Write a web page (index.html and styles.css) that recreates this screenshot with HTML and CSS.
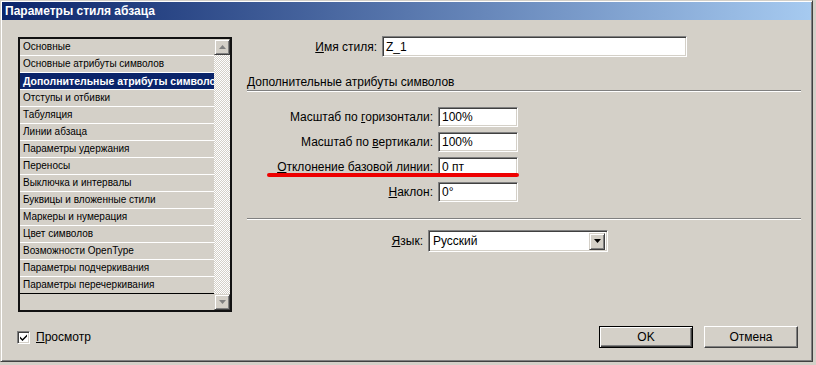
FILE: index.html
```html
<!DOCTYPE html>
<html lang="ru">
<head>
  <meta charset="UTF-8">
  <title>Параметры стиля абзаца</title>
  <link rel="stylesheet" href="styles.css">
</head>
<body>
  <div class="window">
    <div class="titlebar">Параметры стиля абзаца</div>

    <div class="content">
      <div class="main">
        <div class="listbox">
          <div class="items">
            <div class="item">Основные</div>
            <div class="item">Основные атрибуты символов</div>
            <div class="item selected">Дополнительные атрибуты символов</div>
            <div class="item">Отступы и отбивки</div>
            <div class="item">Табуляция</div>
            <div class="item">Линии абзаца</div>
            <div class="item">Параметры удержания</div>
            <div class="item">Переносы</div>
            <div class="item">Выключка и интервалы</div>
            <div class="item">Буквицы и вложенные стили</div>
            <div class="item">Маркеры и нумерация</div>
            <div class="item">Цвет символов</div>
            <div class="item">Возможности OpenType</div>
            <div class="item">Параметры подчеркивания</div>
            <div class="item last">Параметры перечеркивания</div>
          </div>
          <div class="scrollbar">
            <div class="sbtn">
              <svg width="7" height="5" viewBox="0 0 7 5"><path d="M3.5 0 L7 4 L0 4 Z" fill="#808080"/></svg>
            </div>
            <div class="track"></div>
            <div class="sbtn">
              <svg width="7" height="5" viewBox="0 0 7 5"><path d="M0 0 L7 0 L3.5 4 Z" fill="#808080"/></svg>
            </div>
          </div>
        </div>

        <div class="panel">
          <div class="row name-row">
            <label class="lbl"><u>И</u>мя стиля:</label>
            <div class="field wide">Z_1</div>
          </div>

          <div class="group-title">Дополнительные атрибуты символов</div>

          <div class="fields">
            <div class="row">
              <label class="lbl lbl-f">Масштаб по <u>г</u>оризонтали:</label>
              <div class="field small">100%</div>
            </div>
            <div class="row">
              <label class="lbl lbl-f">Масштаб по <u>в</u>ертикали:</label>
              <div class="field small">100%</div>
            </div>
            <div class="row marked">
              <label class="lbl lbl-f"><u>О</u>тклонение базовой линии:</label>
              <div class="field small">0 пт</div>
              <span class="redline"></span>
            </div>
            <div class="row">
              <label class="lbl lbl-f"><u>Н</u>аклон:</label>
              <div class="field small">0°</div>
            </div>
          </div>

          <div class="sep"></div>

          <div class="row lang-row">
            <label class="lbl lbl-l"><u>Я</u>зык:</label>
            <div class="select">
              <span>Русский</span>
              <div class="dd">
                <svg width="7" height="4" viewBox="0 0 7 4"><path d="M0 0 L7 0 L3.5 4 Z" fill="#000"/></svg>
              </div>
            </div>
          </div>
        </div>
      </div>

      <div class="bottom">
        <div class="check">
          <span class="box">
            <svg width="9" height="9" viewBox="0 0 9 9"><path d="M1 3.5 L3.5 6 L8 1.5 L8 3.5 L3.5 8 L1 5.5 Z" fill="#000"/></svg>
          </span>
          <span><u>П</u>росмотр</span>
        </div>
        <div class="buttons">
          <div class="btn default">OK</div>
          <div class="btn">Отмена</div>
        </div>
      </div>
    </div>
  </div>
</body>
</html>
```

FILE: styles.css
```css
html {
  background: #d4d0c8;
}
body {
  margin: 0;
  font-family: "Liberation Sans", Arial, sans-serif;
  font-size: 12px;
  color: #000;
}
.window {
  width: 813px;
  height: 362px;
  box-sizing: border-box;
  border: 1px solid;
  border-color: #d4d0c8 #404040 #404040 #d4d0c8;
  box-shadow: inset 1px 1px #fff, inset -1px -1px #808080;
  padding: 1px;
  background: #d4d0c8;
}
.titlebar {
  height: 18px;
  line-height: 18px;
  padding-left: 3px;
  color: #fff;
  font-weight: bold;
  font-size: 12px;
  background: linear-gradient(to right, #0a246a, #a6caf0);
}
.content {
  padding: 16px 10px 0 16px;
}
.main {
  display: flex;
  gap: 15px;
  align-items: flex-start;
}

/* list */
.listbox {
  margin-top: 1px;
  width: 214px;
  height: 275px;
  box-sizing: border-box;
  border: 2px solid #111;
  display: flex;
  background: #d4d0c8;
}
.items {
  width: 194px;
  overflow: hidden;
  font-size: 10px;
}
.item {
  height: 16px;
  line-height: 16px;
  border-bottom: 1px solid #fff;
  padding-left: 3px;
  white-space: nowrap;
  overflow: hidden;
}
.item.selected {
  background: #0a246a;
  color: #fff;
  font-weight: bold;
  font-size: 10.5px;
}
.item.last {
  border-bottom-color: #000;
}
.scrollbar {
  width: 16px;
  display: flex;
  flex-direction: column;
}
.sbtn {
  height: 16px;
  box-sizing: border-box;
  border: 1px solid;
  border-color: #d4d0c8 #404040 #404040 #d4d0c8;
  box-shadow: inset 1px 1px #fff, inset -1px -1px #808080;
  background: #d4d0c8;
  display: flex;
  align-items: center;
  justify-content: center;
}
.track {
  flex: 1;
  background-image: repeating-conic-gradient(#fff 0 25%, #d4d0c8 0 50%);
  background-size: 2px 2px;
}

/* right side */
.panel {
  flex: 1;
}
.row {
  display: flex;
  align-items: center;
  gap: 5px;
  height: 20px;
}
.lbl {
  text-align: right;
  white-space: nowrap;
}
.name-row {
  height: 21px;
}
.name-row .lbl {
  width: 130px;
}
.lbl-f {
  width: 186px;
}
.lbl-l {
  width: 176px;
}
.field {
  height: 100%;
  box-sizing: border-box;
  border: 1px solid;
  border-color: #808080 #fff #fff #808080;
  box-shadow: inset 1px 1px #404040, inset -1px -1px #d4d0c8;
  background: #fff;
  padding: 0 3px;
  display: flex;
  align-items: center;
}
.field.wide {
  width: 305px;
}
.field.small {
  width: 80px;
}
.group-title {
  margin-top: 17px;
  height: 16px;
  line-height: 16px;
  border-bottom: 1px solid #808080;
  box-shadow: 0 1px #fff;
}
.fields {
  margin-top: 16px;
  display: flex;
  flex-direction: column;
  gap: 5px;
}
.marked {
  position: relative;
}
.redline {
  position: absolute;
  left: 20px;
  top: 16px;
  width: 252px;
  height: 4px;
  border-radius: 2px;
  background: #ee0000;
}
.sep {
  margin-top: 16px;
  border-top: 1px solid #808080;
  box-shadow: 0 1px #fff;
}
.lang-row {
  margin-top: 11px;
  height: 22px;
}
.select {
  width: 180px;
  height: 22px;
  box-sizing: border-box;
  border: 1px solid;
  border-color: #808080 #fff #fff #808080;
  box-shadow: inset 1px 1px #404040, inset -1px -1px #d4d0c8;
  background: #fff;
  padding: 2px 2px 2px 4px;
  display: flex;
  align-items: center;
  justify-content: space-between;
}
.dd {
  width: 16px;
  height: 17px;
  box-sizing: border-box;
  border: 1px solid;
  border-color: #d4d0c8 #404040 #404040 #d4d0c8;
  box-shadow: inset 1px 1px #fff, inset -1px -1px #808080;
  background: #d4d0c8;
  display: flex;
  align-items: center;
  justify-content: center;
}

/* bottom */
.bottom {
  margin-top: 14px;
  display: flex;
  align-items: center;
  justify-content: space-between;
  height: 22px;
  padding-right: 3px;
}
.check {
  display: flex;
  align-items: center;
  gap: 6px;
  margin-left: -1px;
}
.box {
  width: 13px;
  height: 13px;
  box-sizing: border-box;
  border: 1px solid;
  border-color: #808080 #fff #fff #808080;
  box-shadow: inset 1px 1px #404040, inset -1px -1px #d4d0c8;
  background: #fff;
  display: flex;
  align-items: center;
  justify-content: center;
}
.buttons {
  display: flex;
  gap: 11px;
}
.btn {
  width: 94px;
  height: 22px;
  box-sizing: border-box;
  border: 1px solid;
  border-color: #fff #404040 #404040 #fff;
  box-shadow: inset -1px -1px #808080;
  display: flex;
  align-items: center;
  justify-content: center;
}
.btn.default {
  border: 1px solid #000;
  box-shadow: inset 1px 1px #fff, inset -1px -1px #404040, inset -2px -2px #808080;
}
```
